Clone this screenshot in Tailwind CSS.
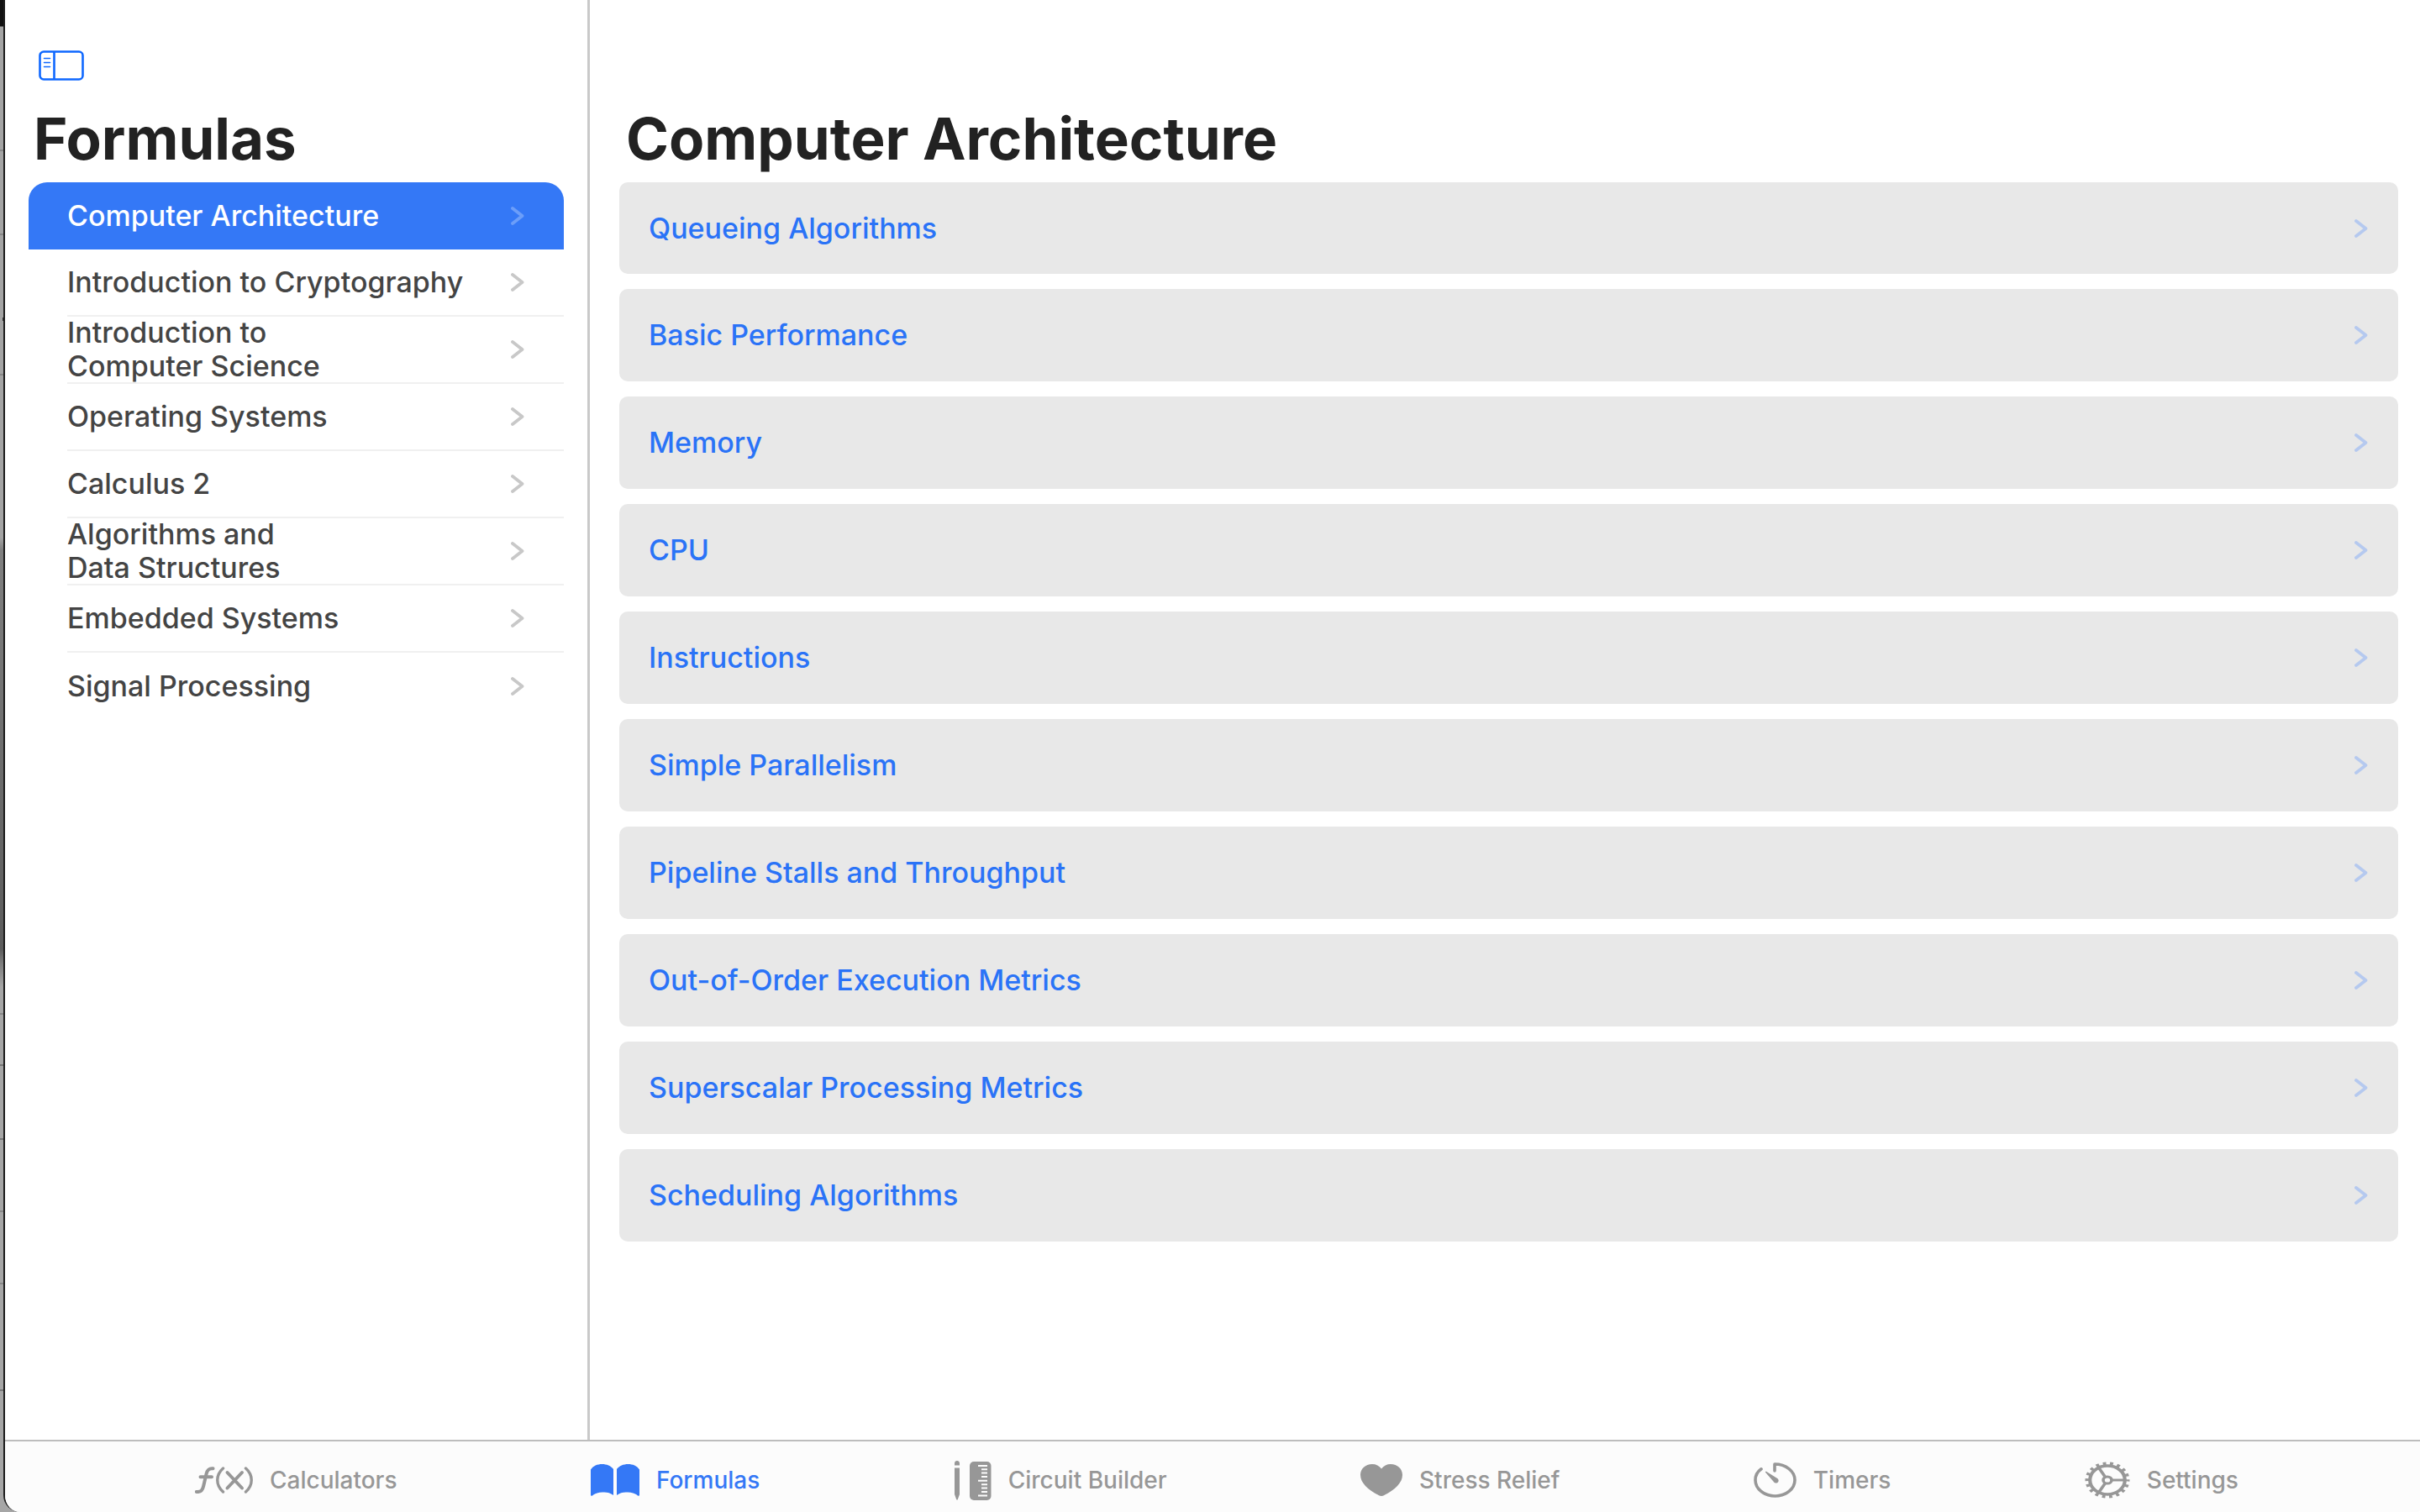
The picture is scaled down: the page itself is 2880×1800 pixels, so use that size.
<!DOCTYPE html>
<html lang="en">
<head>
<meta charset="utf-8">
<meta name="viewport" content="width=device-width, initial-scale=1">
<title>Formulas</title>
<script src="https://cdn.jsdelivr.net/npm/@tailwindcss/browser@4"></script>
</head>
<body class="relative font-[Inter,sans-serif] text-[34px] leading-[40px] font-medium text-[#444]">
<svg class="hidden" aria-hidden="true">
  <symbol id="chevron" viewBox="0 0 16 22"><path d="M2 2 13.500 11 2 20" fill="none" stroke="currentColor" stroke-width="3.800" stroke-linecap="round" stroke-linejoin="round"/></symbol>
</svg>

<!-- Desktop showing behind the window -->
<div aria-hidden="true" class="absolute inset-y-0 left-0 w-10 bg-[linear-gradient(#111_0_31px,#a4a4a4_32px_640px,#808080_655px,#5c5c5c_1130px,#7a7a7a_1145px,#a6a6a6_1175px,#a6a6a6)]">
  <span class="absolute top-[178px] left-0 h-0.5 w-1 bg-[#888]"></span>
  <span class="absolute top-[278px] left-0 h-0.5 w-1 bg-[#888]"></span>
  <span class="absolute top-[378px] left-[3px] h-1 w-1 bg-[#333]"></span>
  <span class="absolute top-[445px] left-0 h-0.5 w-1 bg-[#888]"></span>
  <span class="absolute top-[1206px] left-0 h-0.5 w-1 bg-[#888]"></span>
  <span class="absolute top-[1267px] left-0 h-0.5 w-1 bg-[#777]"></span>
  <span class="absolute top-[1355px] left-0 h-0.5 w-1 bg-[#777]"></span>
  <span class="absolute top-[1441px] left-0 h-0.5 w-1 bg-[#888]"></span>
  <span class="absolute top-[1527px] left-0 h-0.5 w-1 bg-[#888]"></span>
  <span class="absolute top-[1654px] left-0 h-0.5 w-1 bg-[#777]"></span>
</div>

<div class="relative ml-1 flex min-h-screen flex-col overflow-hidden rounded-br-[4px] rounded-bl-[20px] border-l-2 border-[#1c1c1c] bg-white">
  <div class="flex flex-1">
    <aside class="w-[696px] shrink-0 border-r-[3px] border-[#c9c9c9] px-7">
      <button type="button" aria-label="Toggle sidebar" class="mt-[60px] ml-3 block text-[#0f68ff]">
        <svg class="h-9 w-[54px]" viewBox="0 0 54 36" fill="none" stroke="currentColor">
          <rect x="1.500" y="1.500" width="51" height="33" rx="4.500" stroke-width="2.600"/>
          <path d="M18.500 2v32" stroke-width="2.600"/>
          <path d="M6.500 9.500h7M6.500 14.500h7M6.500 19.500h7" stroke-width="1.600" stroke-linecap="round"/>
        </svg>
      </button>
      <h1 class="mt-[29px] px-1.5 text-[69px] leading-[80px] font-bold text-[#222]">Formulas</h1>
      <nav class="mt-3" aria-label="Subjects">
        <a href="#" aria-current="page" class="flex h-20 items-center justify-between rounded-t-[22px] bg-[#3478f6] pr-[47px] pl-[46px] text-white">Computer Architecture<svg class="h-[22px] w-4 text-[#6c9ef9]"><use href="#chevron"/></svg></a>
        <a href="#" class="ml-[46px] flex h-20 items-center justify-between border-b-2 border-[#f0f0f0] pr-[47px]">Introduction to Cryptography<svg class="h-[22px] w-4 text-[#c8c8c8]"><use href="#chevron"/></svg></a>
        <a href="#" class="ml-[46px] flex h-20 items-center justify-between border-b-2 border-[#f0f0f0] pr-[47px]"><span>Introduction to<br>Computer Science</span><svg class="h-[22px] w-4 text-[#c8c8c8]"><use href="#chevron"/></svg></a>
        <a href="#" class="ml-[46px] flex h-20 items-center justify-between border-b-2 border-[#f0f0f0] pr-[47px]">Operating Systems<svg class="h-[22px] w-4 text-[#c8c8c8]"><use href="#chevron"/></svg></a>
        <a href="#" class="ml-[46px] flex h-20 items-center justify-between border-b-2 border-[#f0f0f0] pr-[47px]">Calculus 2<svg class="h-[22px] w-4 text-[#c8c8c8]"><use href="#chevron"/></svg></a>
        <a href="#" class="ml-[46px] flex h-20 items-center justify-between border-b-2 border-[#f0f0f0] pr-[47px]"><span>Algorithms and<br>Data Structures</span><svg class="h-[22px] w-4 text-[#c8c8c8]"><use href="#chevron"/></svg></a>
        <a href="#" class="ml-[46px] flex h-20 items-center justify-between border-b-2 border-[#f0f0f0] pr-[47px]">Embedded Systems<svg class="h-[22px] w-4 text-[#c8c8c8]"><use href="#chevron"/></svg></a>
        <a href="#" class="ml-[46px] flex h-20 items-center justify-between pr-[47px]">Signal Processing<svg class="h-[22px] w-4 text-[#c8c8c8]"><use href="#chevron"/></svg></a>
      </nav>
    </aside>

    <main class="min-w-0 flex-1 pt-[125px] pr-[26px] pb-8 pl-[35px]">
      <h2 class="px-2 text-[69px] leading-[80px] font-bold text-[#222]">Computer Architecture</h2>
      <div class="mt-3 flex flex-col gap-[18px] text-[#2a73f7]">
        <a href="#" class="flex h-[109px] items-center justify-between rounded-[10px] bg-[#e8e8e8] pr-9 pl-[35px]">Queueing Algorithms<svg class="h-[22px] w-4 text-[#b5c9ef]"><use href="#chevron"/></svg></a>
        <a href="#" class="flex h-[110px] items-center justify-between rounded-[10px] bg-[#e8e8e8] pr-9 pl-[35px]">Basic Performance<svg class="h-[22px] w-4 text-[#b5c9ef]"><use href="#chevron"/></svg></a>
        <a href="#" class="flex h-[110px] items-center justify-between rounded-[10px] bg-[#e8e8e8] pr-9 pl-[35px]">Memory<svg class="h-[22px] w-4 text-[#b5c9ef]"><use href="#chevron"/></svg></a>
        <a href="#" class="flex h-[110px] items-center justify-between rounded-[10px] bg-[#e8e8e8] pr-9 pl-[35px]">CPU<svg class="h-[22px] w-4 text-[#b5c9ef]"><use href="#chevron"/></svg></a>
        <a href="#" class="flex h-[110px] items-center justify-between rounded-[10px] bg-[#e8e8e8] pr-9 pl-[35px]">Instructions<svg class="h-[22px] w-4 text-[#b5c9ef]"><use href="#chevron"/></svg></a>
        <a href="#" class="flex h-[110px] items-center justify-between rounded-[10px] bg-[#e8e8e8] pr-9 pl-[35px]">Simple Parallelism<svg class="h-[22px] w-4 text-[#b5c9ef]"><use href="#chevron"/></svg></a>
        <a href="#" class="flex h-[110px] items-center justify-between rounded-[10px] bg-[#e8e8e8] pr-9 pl-[35px]">Pipeline Stalls and Throughput<svg class="h-[22px] w-4 text-[#b5c9ef]"><use href="#chevron"/></svg></a>
        <a href="#" class="flex h-[110px] items-center justify-between rounded-[10px] bg-[#e8e8e8] pr-9 pl-[35px]">Out-of-Order Execution Metrics<svg class="h-[22px] w-4 text-[#b5c9ef]"><use href="#chevron"/></svg></a>
        <a href="#" class="flex h-[110px] items-center justify-between rounded-[10px] bg-[#e8e8e8] pr-9 pl-[35px]">Superscalar Processing Metrics<svg class="h-[22px] w-4 text-[#b5c9ef]"><use href="#chevron"/></svg></a>
        <a href="#" class="flex h-[110px] items-center justify-between rounded-[10px] bg-[#e8e8e8] pr-9 pl-[35px]">Scheduling Algorithms<svg class="h-[22px] w-4 text-[#b5c9ef]"><use href="#chevron"/></svg></a>
      </div>
    </main>
  </div>

  <nav aria-label="Tabs" class="flex h-[86px] shrink-0 items-center justify-between border-t-2 border-[#bdbdbd] bg-[#fcfcfc] pt-2 pr-[216px] pl-[226px] text-[28px] text-[#979797]">
    <a href="#" class="flex items-center gap-5">
      <svg class="h-8 w-[69px]" viewBox="0 0 69 32" fill="none" stroke="currentColor" stroke-linecap="round" stroke-linejoin="round">
        <path d="M1.800 30C7 30.500 9 28.500 10.200 23L13.600 8.500C14.800 3.500 17 1.800 21.500 2.300M6.500 12.200h13.500" stroke-width="4"/>
        <path d="M33.500 2C24.500 10 24.500 22 33.500 30M60.500 2C69.500 10 69.500 22 60.500 30" stroke-width="3.400"/>
        <path d="M38.500 7 56 25.500M56 7 38.500 25.500" stroke-width="4"/>
      </svg>
      Calculators
    </a>
    <a href="#" aria-current="page" class="flex items-center gap-5 text-[#3478f6]">
      <svg class="h-[38px] w-[58px]" viewBox="0 0 58 38" fill="currentColor">
        <path d="M0 6.500C3 2 8 0 13.500 0S24 2 27 6V37C23 34 18.500 33 14 33.500 9 33.500 5 35 2 37.500 1 38.200 0 37.800 0 36.500Z"/>
        <path d="M58 6.500C55 2 50 0 44.500 0S34 2 31 6V37C35 34 39.500 33 44 33.500 49 33.500 53 35 56 37.500 57 38.200 58 37.800 58 36.500Z"/>
      </svg>
      Formulas
    </a>
    <a href="#" class="flex items-center gap-5">
      <svg class="h-[47px] w-[45px]" viewBox="0 0 45 47">
        <path d="M1 5.500V3C1 1 2.300 0 4 0S7 1 7 3V5.500ZM1 8.500H7V40L4.800 46Q4 47.500 3.200 46L1 40Z" fill="currentColor"/>
        <rect x="19" y="1" width="25.500" height="46" rx="5" fill="currentColor"/>
        <path d="M29 6H40M33 10.200H40M33 14.600H40M33 19H40M29 23.700H40M33 28.200H40M33 32.600H40M33 37H40M29 41.500H40" stroke="#fcfcfc" stroke-width="2"/>
      </svg>
      Circuit Builder
    </a>
    <a href="#" class="flex items-center gap-5">
      <svg class="h-[38px] w-[50px]" viewBox="0 0 50 38" fill="currentColor">
        <path d="M25 5.500C22.500 2 18.500 0 14 0 6 0 0 5.500 0 12.800 0 22.500 9 30.500 22 37.200Q25 38.800 28 37.200C41 30.500 50 22.500 50 12.800 50 5.500 44 0 36 0 31.500 0 27.500 2 25 5.500Z"/>
      </svg>
      Stress Relief
    </a>
    <a href="#" class="flex items-center gap-5">
      <svg class="h-[42px] w-[51px]" viewBox="0 0 51 42">
        <path d="M25 10V2C38.500 2 49 10.500 49 21S38.500 40 25.500 40 2 31.500 2 21C2 15.500 4.500 11 9 7.800" fill="none" stroke="currentColor" stroke-width="3.600" stroke-linecap="round" stroke-linejoin="round"/>
        <path d="M15 10.800 28.200 19C31 21 29.500 25 26 24.500 24.800 24.300 24 23.600 23.400 22.600L14 11.800Q13.500 10.200 15 10.800Z" fill="currentColor"/>
      </svg>
      Timers
    </a>
    <a href="#" class="flex items-center gap-5">
      <svg class="h-[44px] w-[54px]" viewBox="-27 -27 54 54" preserveAspectRatio="none" fill="none" stroke="currentColor">
        <circle r="20.800" stroke-width="4.200"/>
        <circle r="24" stroke-width="5" stroke-dasharray="3.800 4.578" stroke-dashoffset="1.900"/>
        <circle r="5" stroke-width="3.600"/>
        <path d="M6 0H20M-3 5.200-10 17.500M-3-5.200-10-17.500" stroke-width="3.800"/>
      </svg>
      Settings
    </a>
  </nav>
</div>
</body>
</html>
